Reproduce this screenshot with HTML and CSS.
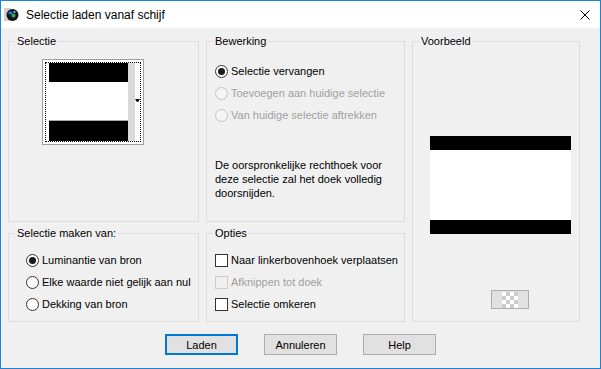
FILE: index.html
```html
<!DOCTYPE html>
<html lang="nl">
<head>
<meta charset="utf-8">
<title>Selectie laden vanaf schijf</title>
<link rel="stylesheet" href="styles.css">
</head>
<body>
<div class="window">
  <div class="titlebar">
    <svg class="app-icon" viewBox="0 0 15 15" aria-hidden="true">
      <rect x="0" y="1" width="7" height="13" fill="#cfcfcf"/>
      <circle cx="8.5" cy="8" r="6" fill="#15151c"/>
      <ellipse cx="6.5" cy="6" rx="2.2" ry="1.8" fill="#2a6ed8"/>
      <ellipse cx="9.5" cy="8.5" rx="2" ry="2" fill="#2fae4c"/>
      <circle cx="10.5" cy="5" r="1" fill="#8fd0ff"/>
    </svg>
    <span class="title">Selectie laden vanaf schijf</span>
    <svg class="close" viewBox="0 0 10 10" aria-hidden="true">
      <path d="M0.5 0.5 L9.5 9.5 M9.5 0.5 L0.5 9.5" stroke="#000" stroke-width="1" fill="none"/>
    </svg>
  </div>
  <div class="content">
    <div class="groups">
      <fieldset class="group g-selectie">
        <legend>Selectie</legend>
        <div class="picker">
          <div class="picker-focus">
            <div class="thumb">
              <div class="bar-top"></div>
              <div class="mid"></div>
              <div class="bar-bottom"></div>
            </div>
            <div class="strip"></div>
            <div class="arrow-col"><span class="tri"></span></div>
          </div>
        </div>
      </fieldset>
      <fieldset class="group g-bewerking">
        <legend>Bewerking</legend>
        <div class="gbody">
          <div class="option"><span class="radio checked"></span><span>Selectie vervangen</span></div>
          <div class="option disabled"><span class="radio"></span><span>Toevoegen aan huidige selectie</span></div>
          <div class="option disabled"><span class="radio"></span><span>Van huidige selectie aftrekken</span></div>
          <p class="desc">De oorspronkelijke rechthoek voor deze selectie zal het doek volledig doorsnijden.</p>
        </div>
      </fieldset>
      <fieldset class="group g-voorbeeld">
        <legend>Voorbeeld</legend>
        <div class="preview">
          <div class="pv-top"></div>
          <div class="pv-mid"></div>
          <div class="pv-bottom"></div>
        </div>
        <div class="chk-btn"><span class="checker"></span></div>
      </fieldset>
      <fieldset class="group g-bron">
        <legend>Selectie maken van:</legend>
        <div class="gbody">
          <div class="option"><span class="radio checked"></span><span>Luminantie van bron</span></div>
          <div class="option"><span class="radio"></span><span>Elke waarde niet gelijk aan nul</span></div>
          <div class="option"><span class="radio"></span><span>Dekking van bron</span></div>
        </div>
      </fieldset>
      <fieldset class="group g-opties">
        <legend>Opties</legend>
        <div class="gbody">
          <div class="option"><span class="check"></span><span>Naar linkerbovenhoek verplaatsen</span></div>
          <div class="option disabled"><span class="check"></span><span>Afknippen tot doek</span></div>
          <div class="option"><span class="check"></span><span>Selectie omkeren</span></div>
        </div>
      </fieldset>
    </div>
    <div class="buttons">
      <button class="btn default">Laden</button>
      <button class="btn">Annuleren</button>
      <button class="btn">Help</button>
    </div>
  </div>
</div>
</body>
</html>
```
FILE: styles.css
```css
* { box-sizing: border-box; }
html, body { margin: 0; padding: 0; }
body {
  width: 601px;
  height: 369px;
  overflow: hidden;
  font-family: "Liberation Sans", Arial, sans-serif;
  font-size: 11px;
  color: #000;
  background: #fff;
}
.window {
  width: 601px;
  height: 369px;
  border: 1px solid #1883d7;
  background: #f0f0f0;
  display: flex;
  flex-direction: column;
}
.titlebar {
  height: 27px;
  flex: none;
  background: #fff;
  display: flex;
  align-items: center;
  padding-left: 3px;
}
.app-icon { width: 15px; height: 15px; margin-right: 7px; flex: none; }
.title { font-size: 12px; flex: 1; }
.close { width: 10px; height: 10px; margin-right: 10px; flex: none; }

.content { padding-top: 7px; }
.groups {
  margin-left: 7px;
  display: grid;
  grid-template-columns: 191px 199px 168px;
  grid-template-rows: 187px 95px;
  column-gap: 7px;
  row-gap: 5px;
}
.group {
  margin: 0;
  padding: 0;
  min-width: 0;
  border: 1px solid #dcdcdc;
}
.group legend {
  padding: 0 2px;
  margin-left: 6px;
  line-height: 13px;
  font-size: 11px;
}
.g-voorbeeld { grid-column: 3; grid-row: 1 / span 2; }
.g-bewerking .gbody { padding: 12px 0 0 8px; }
.g-bron .gbody { padding: 9px 0 0 17px; }
.g-opties .gbody { padding: 9px 0 0 8px; }

.option {
  display: flex;
  align-items: center;
  gap: 3px;
  height: 22px;
  white-space: nowrap;
}
.option.disabled { color: #a0a0a0; }
.radio {
  width: 13px;
  height: 13px;
  flex: none;
  border: 1px solid #333;
  border-radius: 50%;
  background: #fff;
  display: flex;
  align-items: center;
  justify-content: center;
}
.radio.checked::after {
  content: "";
  width: 7px;
  height: 7px;
  border-radius: 50%;
  background: #1a1a1a;
}
.option.disabled .radio { border-color: #c4c4c4; background: #f4f4f4; }
.check {
  width: 13px;
  height: 13px;
  flex: none;
  border: 1px solid #333;
  background: #fff;
}
.option.disabled .check { border-color: #cccccc; background: #f0f0f0; }

.desc {
  margin: 32px 0 0 0;
  width: 175px;
  line-height: 14px;
}

.picker {
  width: 102px;
  height: 86px;
  margin: 11px 0 0 33px;
  border: 1px solid #a0a0a0;
  background: #fff;
  padding: 2px;
}
.picker-focus {
  height: 100%;
  border: 1px dotted #000;
  display: flex;
  padding-left: 3px;
}
.thumb { width: 79px; display: flex; flex-direction: column; }
.bar-top { height: 19px; background: #000; }
.mid { flex: 1; background: #fff; }
.bar-bottom { height: 21px; background: #000; border-top: 1px solid #a8a8a8; }
.strip { width: 7px; background: #dadada; }
.arrow-col { width: 5px; }
.tri {
  display: block;
  width: 5px;
  height: 0;
  margin-top: 36px;
  border-left: 2px solid transparent;
  border-right: 2px solid transparent;
  border-top: 3px solid #000;
}

.preview {
  width: 141px;
  margin: 88px 0 0 17px;
  display: flex;
  flex-direction: column;
}
.pv-top { height: 14px; background: #000; }
.pv-mid { height: 70px; background: #fff; }
.pv-bottom { height: 14px; background: #000; }
.chk-btn {
  width: 38px;
  height: 19px;
  margin: 56px 0 0 78px;
  border: 1px solid #adadad;
  background: #e1e1e1;
  display: flex;
  align-items: center;
  justify-content: center;
}
.checker {
  width: 16px;
  height: 16px;
  background-color: #fff;
  background-image: conic-gradient(#cbcbcb 25%, #fff 0 50%, #cbcbcb 0 75%, #fff 0);
  background-size: 8px 8px;
}

.buttons {
  display: flex;
  justify-content: center;
  gap: 26px;
  margin-top: 12px;
}
.btn {
  width: 73px;
  height: 21px;
  padding: 0;
  border: 1px solid #adadad;
  background: #e1e1e1;
  font-family: "Liberation Sans", Arial, sans-serif;
  font-size: 11px;
  color: #000;
}
.btn.default { border: 2px solid #0078d7; }
```
